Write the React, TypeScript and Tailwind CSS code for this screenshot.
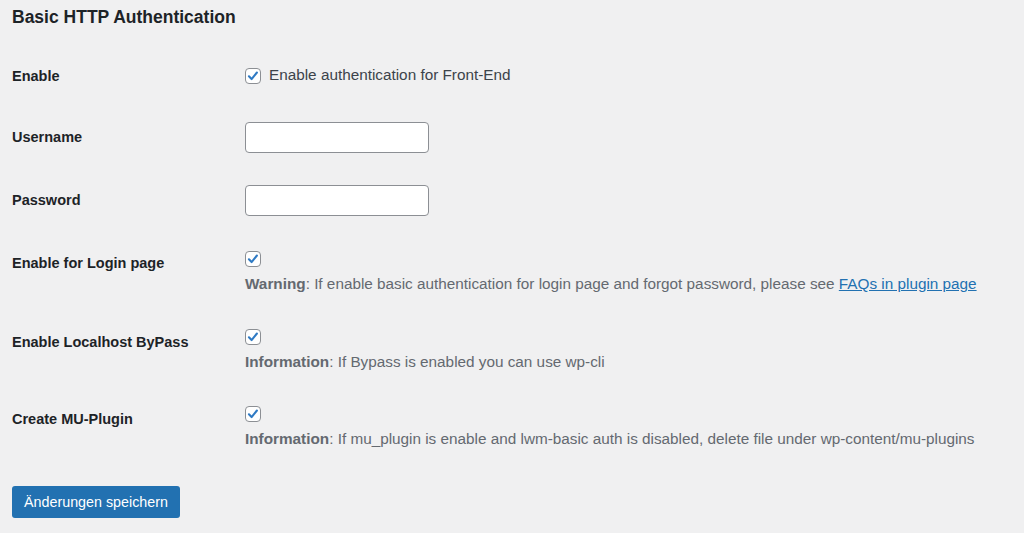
import React from "react";

const font = { fontFamily: '"Liberation Sans", Arial, sans-serif' };

const Check: React.FC = () => (
  <span className="flex h-4 w-4 shrink-0 items-center justify-center rounded-[4px] border border-[#8c8f94] bg-white">
    <svg viewBox="0 0 20 20" className="h-[16px] w-[16px]">
      <path d="M4.2 10.4l3.8 4 7.6-9.4" fill="none" stroke="#2f7ac4" strokeWidth="3" strokeLinecap="round" strokeLinejoin="round" />
    </svg>
  </span>
);

const Label: React.FC<{ text: string; pt?: string }> = ({ text, pt = "pt-0" }) => (
  <div className={`w-[233px] shrink-0 text-[14.5px] leading-5 font-bold text-[#1d2327] ${pt}`}>{text}</div>
);

const Desc: React.FC<{ strong: string; children: React.ReactNode }> = ({ strong, children }) => (
  <p className="mt-[6px] pt-px text-[15.3px] leading-5 text-[#646970]">
    <span className="font-bold">{strong}</span>: {children}
  </p>
);

export default function App() {
  return (
    <div className="min-h-[533px] bg-[#f0f0f1] pl-3" style={font}>
      <h2 className="pt-[5px] text-[17.5px] leading-6 font-bold text-[#1d2327]">Basic HTTP Authentication</h2>

      <div className="mt-9 flex">
        <Label text="Enable" pt="pt-px" />
        <label className="flex h-5 items-center gap-2 pt-px text-[15.3px] text-[#3c434a]">
          <Check />
          <span>Enable authentication for Front-End</span>
        </label>
      </div>

      <div className="mt-9 flex">
        <Label text="Username" pt="pt-[5px]" />
        <div className="h-[31px] w-[184px] rounded-[4px] border border-[#8c8f94] bg-white" />
      </div>

      <div className="mt-8 flex">
        <Label text="Password" pt="pt-[5px]" />
        <div className="h-[31px] w-[184px] rounded-[4px] border border-[#8c8f94] bg-white" />
      </div>

      <div className="mt-[35px] flex">
        <Label text="Enable for Login page" pt="pt-[2px]" />
        <div>
          <Check />
          <Desc strong="Warning">
            If enable basic authentication for login page and forgot password, please see{" "}
            <a className="text-[#2271b1] underline">FAQs in plugin page</a>
          </Desc>
        </div>
      </div>

      <div className="mt-[35px] flex">
        <Label text="Enable Localhost ByPass" pt="pt-[3px]" />
        <div>
          <Check />
          <Desc strong="Information">If Bypass is enabled you can use wp-cli</Desc>
        </div>
      </div>

      <div className="mt-[34px] flex">
        <Label text="Create MU-Plugin" pt="pt-[3px]" />
        <div>
          <Check />
          <Desc strong="Information">
            If mu_plugin is enable and lwm-basic auth is disabled, delete file under wp-content/mu-plugins
          </Desc>
        </div>
      </div>

      <button className="mt-[37px] h-8 w-[168px] rounded-[3px] bg-[#2271b1] pt-[2px] text-[14.3px] text-white">
        Änderungen speichern
      </button>
    </div>
  );
}
